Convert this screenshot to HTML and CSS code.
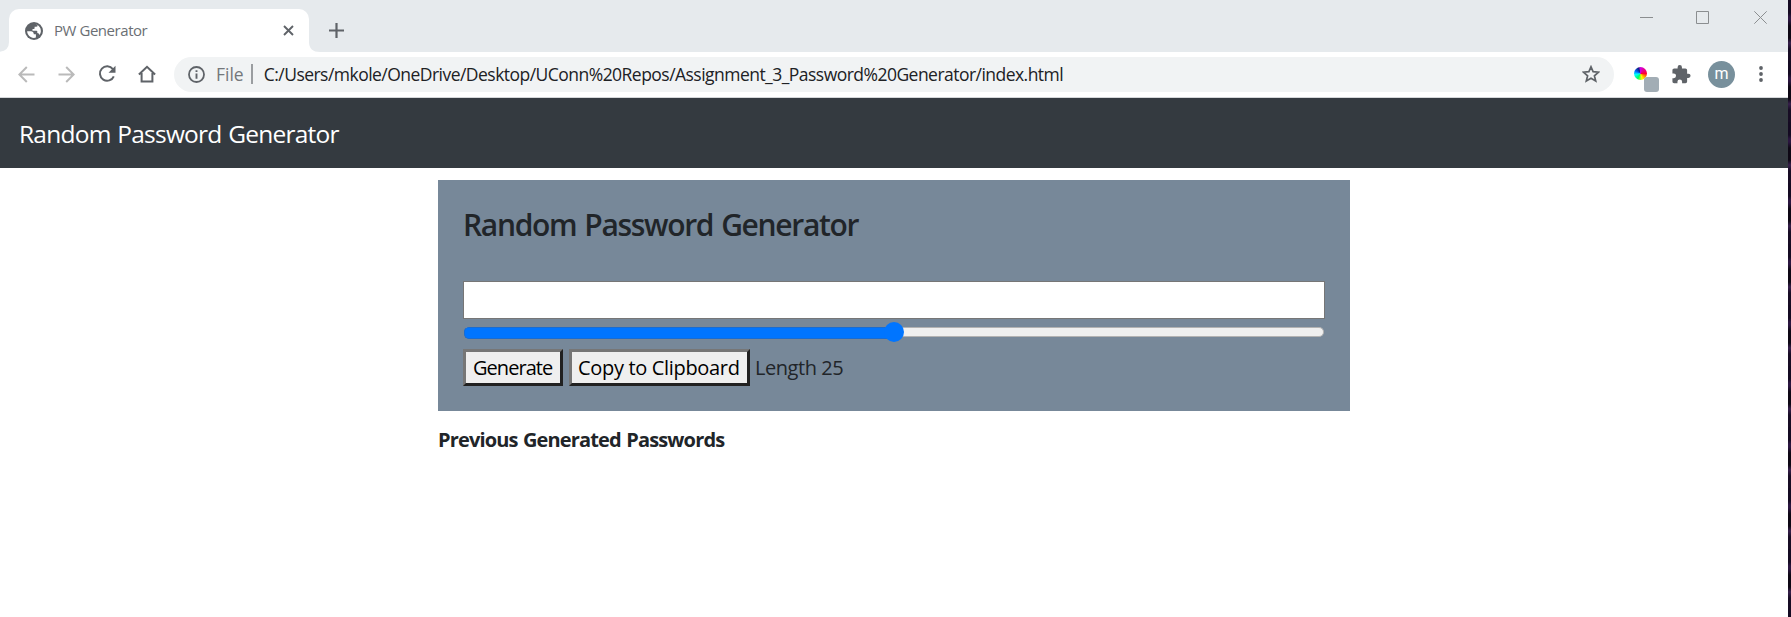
FILE: index.html
```html
<!DOCTYPE html>
<html lang="en">
<head>
<meta charset="utf-8">
<title>PW Generator</title>
<link rel="stylesheet" href="styles.css">
</head>
<body>
<div class="screen">
<div class="window">
  <div class="tabstrip">
    <svg class="flare" width="9" height="10" viewBox="0 0 9 10"><path d="M9 0V10H0V9.8Q9 8.500 9 0Z" fill="#fff"/></svg>
    <div class="tab">
      <svg class="globe" width="18" height="18" viewBox="0 0 18 18"><circle cx="9" cy="9" r="9" fill="#5f6368"/><path d="M2.100 9.300L6.300 9.300Q8.600 9.500 8.700 11.600L8.800 12.300H10.900V15.600Q8.500 16.500 5.700 15.100Q2.300 13 2.100 9.300ZM10.700 2.300Q15.900 4.100 15.900 9.300Q15.700 11.700 14.600 12.900Q14 11.200 12.300 11.100V9.600Q12.300 8.800 11.500 8.800H7.500V7H8.800Q9.600 7 9.600 6.200V4.800H11Q12.700 4.700 12.700 3.400Z" fill="#fff"/></svg>
      <span class="tab-title">PW Generator</span>
      <svg class="tab-close" width="11" height="11" viewBox="0 0 11 11"><path d="M1 1L10 10M10 1L1 10" stroke="#5f6368" stroke-width="1.900"/></svg>
    </div>
    <svg class="flare" width="11" height="10" viewBox="0 0 11 10"><path d="M0 0V10H11Q0 10 0 0Z" fill="#fff"/></svg>
    <svg class="new-tab" width="15" height="15" viewBox="0 0 15 15"><path d="M7.500 0V15M0 7.500H15" stroke="#5f6368" stroke-width="2.200"/></svg>
    <div class="controls">
      <svg width="13" height="13" viewBox="0 0 13 13"><path d="M0 6.500H13"/></svg>
      <svg width="13" height="13" viewBox="0 0 13 13"><path d="M.5 .5H12.500V12.500H.5Z"/></svg>
      <svg class="win-close" width="13" height="13" viewBox="0 0 13 13"><path d="M.3 .3L12.700 12.700M12.700 .3L.3 12.700"/></svg>
    </div>
  </div>
  <div class="toolbar">
    <svg class="nav-ic dim" width="17" height="17" viewBox="0 0 17 17"><path d="M16.500 8.500H1.500M8.800 1L1.300 8.500L8.800 16"/></svg>
    <svg class="nav-ic dim" width="17" height="17" viewBox="0 0 17 17"><path d="M.5 8.500H15.500M8.200 1L15.700 8.500L8.200 16"/></svg>
    <svg class="nav-ic reload" width="18" height="18" viewBox="0 0 18 18"><path d="M14.900 4.200A7.200 7.200 0 1 0 15.800 11.300"/><path d="M17.500 .8V7.800H10.500Z" fill="#5f6368" stroke="none"/></svg>
    <svg class="nav-ic" width="18" height="18" viewBox="0 0 18 18"><path d="M.9 9.400L9 1.800L17.100 9.400M3.600 8V16.500H14.400V8"/></svg>
    <div class="omnibox">
      <svg width="17" height="17" viewBox="0 0 17 17"><circle cx="8.500" cy="8.500" r="7.500" fill="none" stroke="#5f6368" stroke-width="1.800"/><path d="M8.500 7.600V12.800M8.500 4.200V6" stroke="#5f6368" stroke-width="1.900"/></svg>
      <span class="scheme">File</span><span class="bar"></span>
      <span class="url">C:/Users/mkole/OneDrive/Desktop/UConn%20Repos/Assignment_3_Password%20Generator/index.html</span>
      <svg class="star" width="18" height="18" viewBox="0 0 18 18"><path d="M9 1.800L11.100 6.700L16.500 7.200L12.400 10.800L13.700 16L9 13.200L4.300 16L5.600 10.800L1.500 7.200L6.900 6.700Z" fill="none" stroke="#5f6368" stroke-width="1.700"/></svg>
    </div>
    <div class="extension"><span class="wheel"></span><span class="badge"></span></div>
    <svg class="puzzle" width="19" height="19" viewBox="2 1 21 22"><path fill="#5f6368" d="M20.500 11H19V7c0-1.100-.9-2-2-2h-4V3.500a2.500 2.500 0 0 0-5 0V5H4c-1.100 0-2 .9-2 2v3.800h1.500a2.700 2.700 0 0 1 0 5.400H2V20c0 1.100.9 2 2 2h3.800v-1.500a2.700 2.700 0 0 1 5.400 0V22H17c1.100 0 2-.9 2-2v-4h1.500a2.500 2.500 0 0 0 0-5z"/></svg>
    <span class="avatar">m</span>
    <svg class="dots" width="4" height="16" viewBox="0 0 4 16"><circle cx="2" cy="2" r="1.900"/><circle cx="2" cy="8" r="1.900"/><circle cx="2" cy="14" r="1.900"/></svg>
  </div>
  <nav class="navbar"><span class="brand">Random Password Generator</span></nav>
  <main class="content">
    <section class="panel">
      <h1 class="title"><span>Random Password Generator</span></h1>
      <input class="password" type="text">
      <div class="slider"><div class="track"><div class="fill"></div></div><span class="thumb"></span></div>
      <div class="actions">
        <button class="btn generate"><span>Generate</span></button>
        <button class="btn copy"><span>Copy to Clipboard</span></button>
        <span class="length">Length 25</span>
      </div>
    </section>
    <p class="previous"><span>Previous Generated Passwords</span></p>
  </main>
</div>
<div class="wallpaper"></div>
</div>
</body>
</html>
```
FILE: styles.css
```css
* { box-sizing: border-box; }
body { margin: 0; font-family: "Open Sans", sans-serif; color: #212529; background: #fff; }
svg { display: block; flex: none; }
span { white-space: nowrap; }
.screen { display: flex; height: 617px; overflow: hidden; }
.window { width: 1788px; flex: none; background: #fff; }
.wallpaper { flex: 1; background: repeating-linear-gradient(#140a22 0 13px, #2b1640 17px 20px, #0d0714 26px 38px, #37204c 43px, #170c24 49px 61px); }

.tabstrip { display: flex; height: 52px; background: #e6eaed; }
.flare { align-self: flex-end; }
.tab { display: flex; align-items: center; width: 300px; height: 43px; margin-top: 9px; padding: 0 15px 0 16px; background: #fff; border-radius: 10px 10px 0 0; }
.tab-title { margin: -2px 0 0 11px; font-size: 15px; color: #6b6f74; letter-spacing: -0.450px; }
.tab-close { margin-left: auto; }
.new-tab { margin: 23px 0 0 9px; }
.controls { display: flex; gap: 43px; margin: 11px 21px 0 auto; }
.controls path { fill: none; stroke: #8b8e90; stroke-width: 1; }
.win-close { margin-left: 2px; }

.toolbar { display: flex; align-items: center; height: 46px; padding: 0 25px 1px 18px; border-bottom: 1px solid #d5d7da; }
.nav-ic { margin-right: 23px; fill: none; stroke: #5f6368; stroke-width: 2; }
.reload { margin-right: 22px; }
.dim { stroke: #bababa; }
.omnibox { display: flex; align-items: center; width: 1440px; height: 35px; margin-left: -5px; padding: 0 14px; border-radius: 18px; background: #f1f3f4; font-size: 17.5px; }
.scheme { margin-left: 11px; color: #74777b; }
.bar { width: 2px; height: 20px; margin: 0 11px 0 7px; background: #9a9da0; }
.url { letter-spacing: -0.53px; color: #202124; }
.star { margin-left: auto; }
.extension { position: relative; width: 25px; height: 25px; margin: 11px 13px 0 20px; }
.wheel { display: block; width: 13px; height: 13px; border-radius: 50%; background: conic-gradient(#d000e0, #f03 25%, #ff8000 33%, #ff0 45%, #0f6 58%, #0ff 72%, #06f 82%, #102080 94%, #d000e0); }
.badge { position: absolute; left: 10px; top: 10px; width: 15px; height: 15px; border-radius: 3px; background: #a2adb5; }
.puzzle { margin-right: 17px; }
.avatar { width: 27px; height: 27px; border-radius: 50%; background: #78909c; color: #fff; font: 16px/25px Roboto, sans-serif; text-align: center; }
.dots { margin-left: auto; fill: #5f6368; }

.navbar { display: flex; align-items: center; height: 70px; padding: 0 0 0 19px; background: #343a40; color: #fff; font-size: 24.500px; letter-spacing: -0.76px; word-spacing: 1px; }
.content { width: 912px; margin: 12px 0 0 438px; }
.panel { height: 231px; padding: 25px; background: #778899; }
.title { height: 76px; margin: 0; font-size: 30px; font-weight: 600; line-height: 39px; letter-spacing: -1.320px; word-spacing: 1.500px; }
.password { display: block; width: 862px; height: 38px; border: 1px solid #767676; background: #fff; }
.slider { position: relative; height: 30px; padding: 8px 1px 0; }
.track { height: 10px; overflow: hidden; border: 1px solid #b2b2b2; border-radius: 5px; background: #efefef; border-image: none; border-left-color: #1a6cd0; }
.fill { width: 50%; height: 8px; background: #0075ff; box-shadow: 0 0 0 1px #0075ff; }
.thumb { position: absolute; left: 421px; top: 3px; width: 20px; height: 20px; border-radius: 50%; background: #0075ff; }
/* The filled half carries its own darker rim over the track's grey one. */
.slider::before { content: ""; position: absolute; left: 1px; top: 8px; width: 430px; height: 10px; border: 1px solid #1a6cd0; border-right: 0; border-radius: 5px 0 0 5px; background: #0075ff; }
.actions { display: flex; align-items: center; height: 37px; font-size: 20px; }
.btn { height: 37px; padding: 0 7px; border: 3px solid; border-color: #767676 #212121 #212121 #767676; background: #efefef; color: #000; font: 20px/30px "Open Sans", sans-serif; text-align: left; }
.generate { width: 100px; letter-spacing: -0.95px; }
.copy { width: 181px; margin-left: 6px; padding-left: 6px; letter-spacing: -0.33px; }
.length { margin-left: 5px; letter-spacing: -0.45px; }
.previous { margin: 14px 0 0; font-size: 20px; font-weight: 700; line-height: 30px; letter-spacing: -0.85px; word-spacing: 1px; }
```
